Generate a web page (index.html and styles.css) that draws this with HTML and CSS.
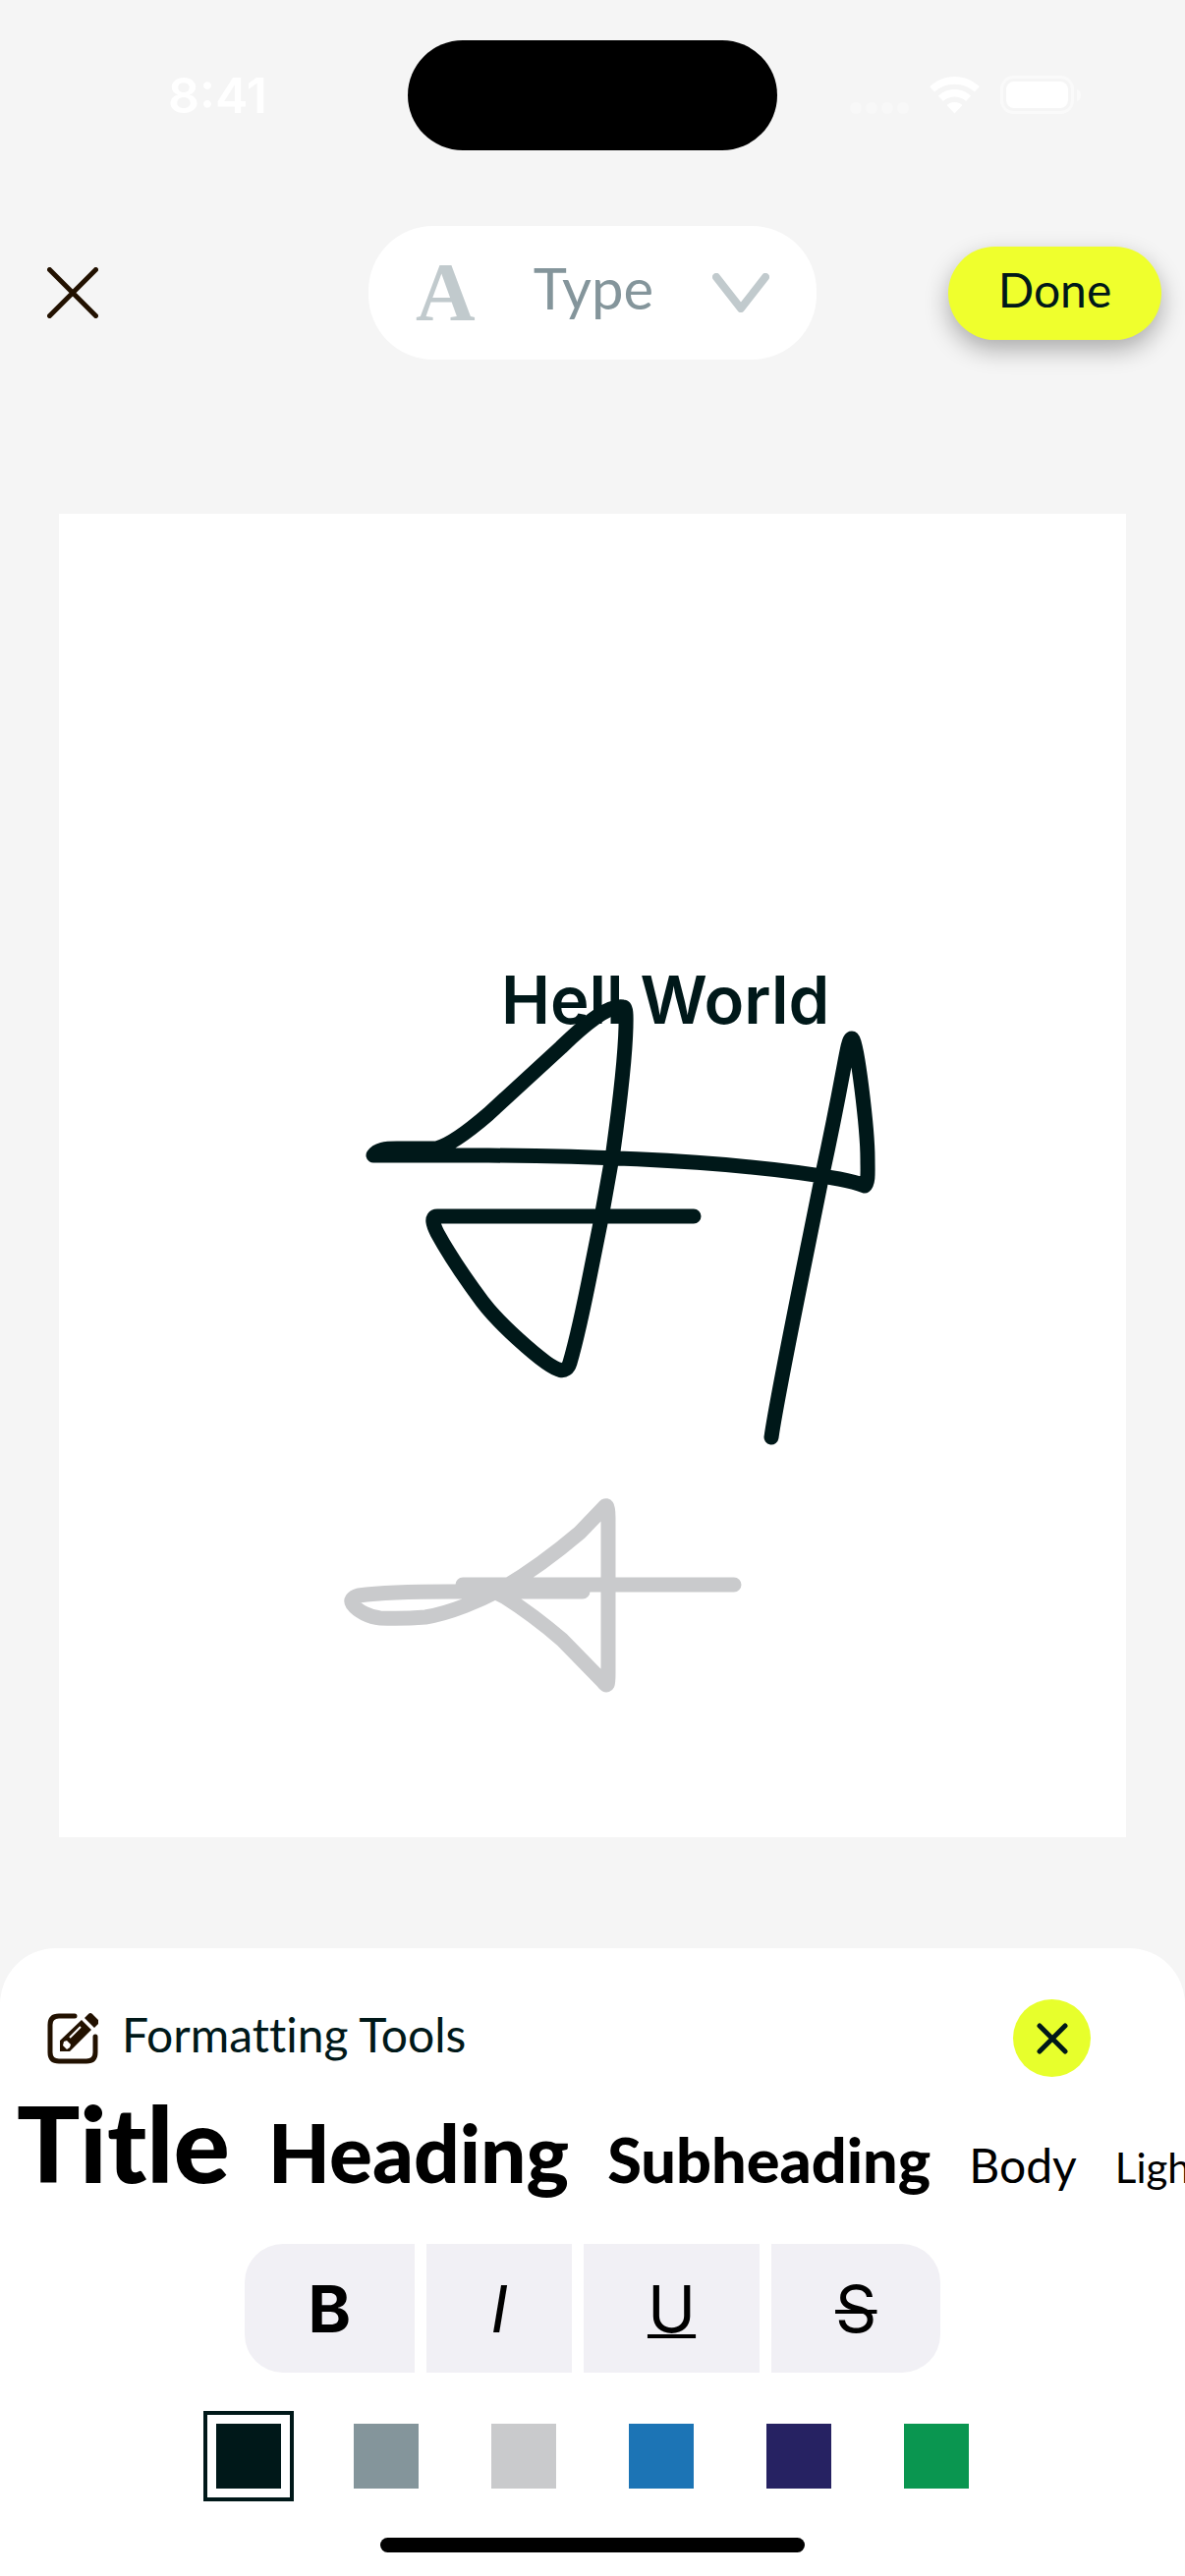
FILE: index.html
```html
<!DOCTYPE html>
<html lang="en">
<head>
<meta charset="utf-8">
<meta name="viewport" content="width=device-width, initial-scale=1">
<title>Note editor</title>
<link rel="stylesheet" href="styles.css">
</head>
<body>
<div class="screen">
  <div class="status">
    <span class="status-time">8:41</span>
    <div class="island"></div>
    <div class="status-icons">
      <svg width="60" height="38" viewBox="0 0 60 38" fill="#f8f8f8" aria-hidden="true"><circle cx="6" cy="32" r="6"/><circle cx="22" cy="32" r="6"/><circle cx="38" cy="32" r="6"/><circle cx="54" cy="32" r="6"/></svg>
      <svg width="51" height="38" viewBox="0 0 51 38" fill="#fff" aria-hidden="true"><path d="M25.500 0c9.900 0 18.800 3.800 25.300 10.200l-5 5.400C40.500 10.700 33.300 7.800 25.500 7.800S10.500 10.700 5.200 15.600l-5-5.400C6.700 3.800 15.600 0 25.500 0z"/><path d="M25.500 13c6.400 0 12.300 2.500 16.600 6.600l-5 5.400c-3.100-2.800-7.200-4.500-11.600-4.500S17 22.200 13.900 25l-5-5.400C13.200 15.500 19.100 13 25.500 13z"/><path d="M25.500 26c3 0 5.800 1.100 7.900 3l-7.900 8.500L17.600 29c2.100-1.900 4.900-3 7.900-3z"/></svg>
      <svg width="83" height="40" viewBox="0 0 83 40" aria-hidden="true"><rect x="1.500" y="1.500" width="72" height="36" rx="12" fill="none" stroke="#fafafa" stroke-width="3"/><path d="M78 14c3 1 4 3 4 6s-1 5-4 6z" fill="#fafafa"/><rect x="6" y="6" width="63" height="27" rx="8" fill="#fff"/></svg>
    </div>
  </div>

  <header class="topbar">
    <button class="icon-button" type="button" aria-label="Close">
      <svg width="52" height="52" viewBox="0 0 52 52" fill="none" stroke="#221100" stroke-width="5" stroke-linecap="round" aria-hidden="true"><path d="M2.500 2.500l47 47M49.500 2.500l-47 47"/></svg>
    </button>
    <label class="mode">
      <span class="mode-letter" aria-hidden="true">A</span>
      <select class="mode-select" aria-label="Tool"><option>Type</option></select>
      <svg width="58" height="40" viewBox="0 0 58 40" fill="none" stroke="#c1cacd" stroke-width="8" stroke-linecap="round" stroke-linejoin="round" aria-hidden="true"><path d="M4 4l25 32L54 4"/></svg>
    </label>
    <button class="done" type="button">Done</button>
  </header>

  <main class="page">
    <svg class="drawing" viewBox="60 523 1086 1347" role="img" aria-label="Drawing with text">
      <text class="drawing-text" x="510" y="1042">Hell World</text>
      <g fill="none" stroke-width="15" stroke-linecap="round" stroke-linejoin="round">
        <path stroke="#001819" d="M706 1238H445C438 1238 441 1247 445 1255Q462 1286 491 1325C510 1350 545 1379 556 1387C566 1394 576 1400 580 1387Q589 1356 602 1290L611 1245L624 1172Q636 1085 637 1045C637 1038 638 1025 634 1025C620 1023 600 1038 571 1066L497 1134Q461 1165 444 1169H404C392 1169 384 1170 380 1176H497Q732 1178 854 1200Q870 1203 880 1207C884 1204 883 1192 883 1180C883 1150 872 1057 867 1057C862 1057 861 1085 837 1195C814 1310 791 1420 785 1463"/>
        <path stroke="#c9cacc" d="M747 1613H471M593 1620H457Q395 1620 365 1624Q355 1627 359 1633C364 1640 376 1646 387 1647Q410 1648 433 1646C458 1642 489 1629 511 1617Q550 1594 590 1560L614 1535C617 1531 619 1531 619 1545V1703C619 1714 619 1719 613 1711L572 1669Q543 1644 513 1625L497 1617"/>
      </g>
    </svg>
  </main>

  <section class="sheet" aria-label="Formatting Tools">
    <div class="sheet-head">
      <svg width="52" height="52" viewBox="0 0 52 52" aria-hidden="true"><path d="M28 3H12Q3 3 3 12V40Q3 49 12 49H40Q49 49 49 40V24" fill="none" stroke="#221100" stroke-width="5" stroke-linecap="round"/><path fill="#221100" d="M13 39V28L35 7l10 10L23 39zM38 5l4-4q2-2 4 0l6 6q1 2 0 4l-4 4z"/><path d="M20 28l4 4-1 3-3 2-4-4 1-4z" fill="#fff"/><path d="M23 25l11-11" fill="none" stroke="#fff" stroke-width="2"/></svg>
      <h1 class="sheet-title">Formatting Tools</h1>
      <button class="sheet-close" type="button" aria-label="Close formatting tools">
        <svg width="32" height="32" viewBox="0 0 32 32" fill="none" stroke="#001819" stroke-width="5" stroke-linecap="round" aria-hidden="true"><path d="M3 3l26 26M29 3L3 29"/></svg>
      </button>
    </div>
    <div class="text-styles">
      <button class="text-style text-style-title" type="button">Title</button>
      <button class="text-style text-style-heading" type="button">Heading</button>
      <button class="text-style text-style-subheading" type="button">Subheading</button>
      <button class="text-style text-style-body" type="button">Body</button>
      <button class="text-style text-style-light" type="button">Light</button>
    </div>
    <div class="marks">
      <button class="mark mark-bold" type="button">B</button>
      <button class="mark mark-italic" type="button">I</button>
      <button class="mark mark-underline" type="button">U</button>
      <button class="mark mark-strike" type="button">S</button>
    </div>
    <div class="swatches" role="radiogroup" aria-label="Text colour">
      <input class="swatch swatch-ink" type="radio" name="colour" aria-label="Ink" checked>
      <input class="swatch swatch-slate" type="radio" name="colour" aria-label="Slate">
      <input class="swatch swatch-silver" type="radio" name="colour" aria-label="Silver">
      <input class="swatch swatch-blue" type="radio" name="colour" aria-label="Blue">
      <input class="swatch swatch-indigo" type="radio" name="colour" aria-label="Indigo">
      <input class="swatch swatch-green" type="radio" name="colour" aria-label="Green">
    </div>
    <div class="home-indicator"></div>
  </section>
</div>
</body>
</html>
```
FILE: styles.css
```css
* {
  box-sizing: border-box;
}

body {
  margin: 0;
  background: #f5f5f5;
  color: #001819;
  font-family: Lato, "Open Sans", sans-serif;
  font-variant-ligatures: none;
}

button,
select {
  margin: 0;
  padding: 0;
  border: 0;
  background: none;
  color: inherit;
  font: inherit;
  font-variant-ligatures: inherit;
}

svg {
  display: block;
  flex: none;
}

.screen {
  display: flex;
  flex-direction: column;
  min-height: 100vh;
  overflow: hidden;
}

/* Status bar */
.status {
  display: grid;
  grid-template-columns: 1fr 376px 1fr;
  align-items: center;
  padding-top: 41px;
}

.status-time {
  padding-left: 28px;
  color: #fff;
  font: 600 50px/60px Inter, sans-serif;
  text-align: center;
}

.island {
  height: 112px;
  border-radius: 56px;
  background: #000;
}

.status-icons {
  display: flex;
  align-items: center;
  justify-content: flex-end;
  gap: 21px;
  padding-right: 105px;
}

/* Top bar */
.topbar {
  display: grid;
  grid-template-columns: 1fr auto 1fr;
  align-items: center;
  margin-top: 77px;
  padding: 0 24px 0 48px;
}

.icon-button {
  justify-self: start;
}

.mode {
  display: flex;
  align-items: center;
  justify-content: space-between;
  width: 456px;
  height: 136px;
  margin-left: -24px;
  padding: 0 48px;
  border-radius: 66px;
  background: #fff;
}

.mode-letter {
  color: #c1cacd;
  font: 700 84px/100px "Liberation Serif", serif;
}

.mode-select {
  appearance: none;
  padding-bottom: 10px;
  color: #84959b;
  font-size: 58px;
  line-height: 72px;
}

.done {
  justify-self: end;
  width: 217px;
  height: 95px;
  padding-bottom: 8px;
  border-radius: 48px;
  background: #efff2d;
  box-shadow: 0 10px 24px rgba(0, 0, 0, 0.3);
  font-size: 48px;
}

/* Page being edited */
.page {
  margin: 157px 60px 113px;
  background: #fff;
}

.drawing {
  width: 100%;
  height: auto;
}

.drawing-text {
  fill: #001819;
  font: 600 67px Inter, sans-serif;
}

/* Formatting sheet */
.sheet {
  display: flex;
  flex: 1;
  flex-direction: column;
  align-items: center;
  padding-top: 52px;
  border-radius: 57px 57px 0 0;
  background: #fff;
}

.sheet-head {
  display: flex;
  align-items: center;
  align-self: stretch;
  gap: 24px;
  padding: 0 96px 0 48px;
}

.sheet-title {
  flex: 1;
  margin: 0;
  padding-bottom: 8px;
  font-size: 48px;
  font-weight: 400;
  line-height: 56px;
}

.sheet-close {
  display: grid;
  place-items: center;
  width: 79px;
  height: 79px;
  border-radius: 50%;
  background: #e7ff2c;
}

.text-styles {
  display: flex;
  align-items: baseline;
  align-self: stretch;
  gap: 39px;
  height: 140px;
  padding: 2px 0 0 17px;
  overflow: hidden;
  color: #000;
  white-space: nowrap;
}

.text-style {
  flex: none;
}

.text-style-title {
  font-size: 107px;
  font-weight: 900;
}

.text-style-heading {
  font-size: 82px;
  font-weight: 900;
}

.text-style-subheading {
  font-size: 63px;
  font-weight: 900;
}

.text-style-body {
  font-size: 48px;
}

.text-style-light {
  font-size: 42px;
}

.marks {
  display: flex;
  gap: 12px;
  margin-top: 30px;
}

.mark {
  height: 131px;
  padding: 0 65px;
  background: #f1f0f5;
  color: #000;
  font: 400 66px/80px Inter, sans-serif;
}

.mark-bold {
  border-radius: 39px 0 0 39px;
  font-weight: 700;
}

.mark-italic {
  font-style: italic;
}

.mark-underline {
  text-decoration: underline 4px;
}

.mark-strike {
  border-radius: 0 39px 39px 0;
  text-decoration: line-through 4px;
}

.swatches {
  display: flex;
  gap: 48px;
  margin-top: 39px;
}

.swatch {
  appearance: none;
  width: 92px;
  height: 92px;
  margin: 0;
  padding: 9px;
  border: 4px solid transparent;
  background: currentColor content-box;
}

.swatch:checked {
  border-color: currentColor;
}

.swatch-ink { color: #001819; }
.swatch-slate { color: #84959b; }
.swatch-silver { color: #c9cacc; }
.swatch-blue { color: #1c74b5; }
.swatch-indigo { color: #262262; }
.swatch-green { color: #0a9650; }

.home-indicator {
  width: 432px;
  height: 15px;
  margin: 37px 0 24px;
  border-radius: 8px;
  background: #000;
}
```
